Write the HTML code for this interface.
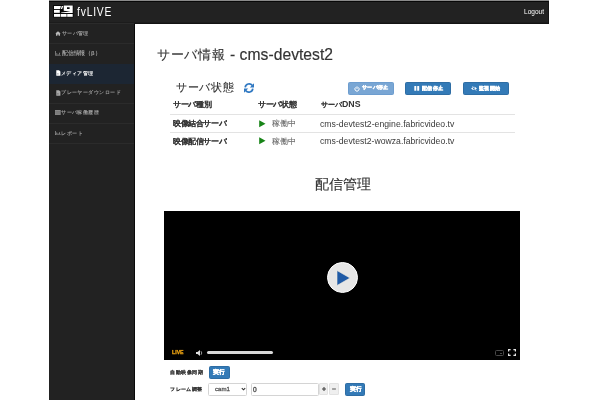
<!DOCTYPE html>
<html><head><meta charset="utf-8">
<style>
*{box-sizing:border-box;margin:0;padding:0}
html,body{width:600px;height:400px;overflow:hidden;background:#fff;font-family:"Liberation Sans",sans-serif;color:#333}
.abs{position:absolute}
.s{position:absolute;white-space:nowrap;line-height:1;transform:scale(0.1);transform-origin:0 0;will-change:transform}
#topline{left:49px;top:0;width:500px;height:1px;background:#8a8a8a}
#nav{left:49px;top:1px;width:500px;height:23px;background:#222;border-top:1px solid #080808;border-bottom:1px solid #141414;border-right:1px solid #151515;box-shadow:inset 0 -1px 0 #1c1c1c}
#side{left:49px;top:24px;width:86px;height:376px;background:#222;border-right:1px solid #080808}
.sep{position:absolute;left:0;width:85px;height:1px;background:#2b2b2b}
.act{position:absolute;left:0;top:39.5px;width:85px;height:20px;background:#1c2633}
.btn{position:absolute;background:#337ab7;border:1px solid #2e6da4;border-radius:1.5px}
.line{position:absolute;height:1px;background:#e3e3e3}
</style></head><body>
<div id="topline" class="abs"></div>
<div id="nav" class="abs">

</div>
<div id="side" class="abs">
  <div class="sep" style="top:-1px"></div>
  <div class="sep" style="top:19px"></div>
  <div class="act"></div>
  <div class="sep" style="top:79px"></div>
  <div class="sep" style="top:99px"></div>
  <div class="sep" style="top:119px"></div>
  <svg class="abs" style="left:6px;top:7px" width="6" height="5" viewBox="0 0 6 5"><path d="M3 0.2 L5.7 2.6 H5 V4.8 H3.6 V3.4 H2.4 V4.8 H1 V2.6 H0.3 Z" fill="#b8b8b8"/></svg>
  <svg class="abs" style="left:6px;top:26.5px" width="6" height="5" viewBox="0 0 6 5"><path d="M0 0 V4.6 H5.8 V4 H0.7 V0 Z M1.4 2.2 H2.2 V3.7 H1.4 Z M2.7 3 H3.5 V3.7 H2.7 Z M4 1.8 H4.8 V3.7 H4 Z" fill="#999"/></svg>
  <svg class="abs" style="left:6.5px;top:46px" width="5" height="6" viewBox="0 0 5 6"><path d="M0.3 0.2 H3 L4.4 1.6 V5.8 H0.3 Z M1.6 3.2 L2.8 3.9 L1.6 4.6 Z" fill="#fff" fill-rule="evenodd"/></svg>
  <svg class="abs" style="left:6.5px;top:66px" width="5" height="6" viewBox="0 0 5 6"><path d="M0.3 0.2 H3 L4.4 1.6 V5.8 H0.3 Z M1.6 3.2 L2.8 3.9 L1.6 4.6 Z" fill="#a8a8a8" fill-rule="evenodd"/></svg>
  <svg class="abs" style="left:6px;top:85.8px" width="6" height="6" viewBox="0 0 6 6"><path d="M0 0 H5.7 V5 H0 Z" fill="#8a8a8a"/><path d="M0.3 1.5 H5.4 M0.3 2.7 H5.4 M0.3 3.9 H5.4" stroke="#5a5a5a" stroke-width="0.35"/></svg>
  <svg class="abs" style="left:6px;top:106.5px" width="6" height="5" viewBox="0 0 6 5"><path d="M0 0 V4 H5.8 V3.4 H0.7 V0 Z M1.4 1.6 H2.2 V3.1 H1.4 Z M2.7 2.4 H3.5 V3.1 H2.7 Z M4 1.2 H4.8 V3.1 H4 Z" fill="#999"/></svg>
</div>

<svg class="abs" style="left:242.5px;top:81.5px" width="12" height="12" viewBox="0 0 12 12"><g fill="none" stroke="#2f78c2" stroke-width="1.7"><path d="M2.2 5.4 A3.9 3.9 0 0 1 9.3 3.6"/><path d="M9.8 6.6 A3.9 3.9 0 0 1 2.7 8.4"/></g><path d="M11 1.2 V5.4 H6.8 Z" fill="#2f78c2"/><path d="M1 10.8 V6.6 H5.2 Z" fill="#2f78c2"/></svg>

<div class="btn" style="left:348px;top:82px;width:46px;height:13px;background:#79a6d4;border-color:#6d9dcf"></div>
<svg class="abs" style="left:353.5px;top:85.5px" width="6" height="6" viewBox="0 0 6 6"><path d="M1.7 1.4 A2.1 2.1 0 1 0 4.3 1.4" stroke="#fff" stroke-width="1" fill="none"/><path d="M3 0.4 V2.9" stroke="#fff" stroke-width="1"/></svg>
<div class="btn" style="left:405px;top:82px;width:46px;height:13px"></div>
<svg class="abs" style="left:413.5px;top:86px" width="6" height="5" viewBox="0 0 6 5"><rect x="0.3" y="0" width="2" height="4.7" rx="0.3" fill="#fff"/><rect x="3.2" y="0" width="2" height="4.7" rx="0.3" fill="#fff"/></svg>
<div class="btn" style="left:463px;top:82px;width:46px;height:13px"></div>
<svg class="abs" style="left:470.5px;top:86px" width="6" height="5" viewBox="0 0 6 5"><path d="M0.1 2.4 Q3 -0.8 5.9 2.4 Q3 5.6 0.1 2.4 Z" fill="#fff"/><circle cx="3" cy="2.4" r="1.1" fill="#337ab7"/><path d="M0.9 0 L5.1 4.8" stroke="#337ab7" stroke-width="0.8"/><path d="M1.3 0.1 L5.5 4.9" stroke="#fff" stroke-width="0.5"/></svg>

<div class="line" style="left:170px;top:114px;width:345px"></div>
<svg class="abs" style="left:259px;top:120px" width="7" height="8" viewBox="0 0 7 8"><path d="M0.2 0.3 L6.5 3.8 L0.2 7.3 Z" fill="#178417"/></svg>
<div class="line" style="left:170px;top:132px;width:345px"></div>
<svg class="abs" style="left:259px;top:137px" width="7" height="8" viewBox="0 0 7 8"><path d="M0.2 0.3 L6.5 3.8 L0.2 7.3 Z" fill="#178417"/></svg>

<!-- video -->
<div class="abs" style="left:164px;top:211px;width:356px;height:149px;background:#000">
  <div class="abs" style="left:163px;top:51px;width:31px;height:31px;border-radius:50%;background:#e6e6e6;border:1px solid #fff"></div>
  <svg class="abs" style="left:172px;top:59px" width="15" height="16" viewBox="0 0 15 16"><path d="M1 0.5 L14 8 L1 15.5 Z" fill="#1f5aa6" stroke="#f5efe0" stroke-width="0.6"/></svg>
  <svg class="abs" style="left:32px;top:138.5px" width="7" height="6" viewBox="0 0 7 6"><path d="M0 2 H1.5 L4 0 V6 L1.5 4 H0 Z" fill="#ddd"/><path d="M5 1.2 Q6.6 3 5 4.8" stroke="#aaa" stroke-width="0.9" fill="none"/></svg>
  <div class="abs" style="left:43px;top:140px;width:66px;height:3px;border-radius:1.5px;background:#d8d8d8"></div>
  <div class="abs" style="left:331px;top:138.5px;width:9px;height:6px;border:1px solid #484848;border-radius:1.5px"><div class="abs" style="left:3.5px;top:2px;width:2.5px;height:1.5px;background:#484848"></div></div>
  <svg class="abs" style="left:344px;top:138px" width="8" height="7" viewBox="0 0 8 7"><path d="M0.6 2.6 V0.6 H2.6 M5.4 0.6 H7.4 V2.6 M7.4 4.4 V6.4 H5.4 M2.6 6.4 H0.6 V4.4" stroke="#e6e6e6" stroke-width="1.2" fill="none"/></svg>
</div>

<!-- controls -->
<div class="btn" style="left:208.5px;top:366px;width:21px;height:13px"></div>
<div class="abs" style="left:208px;top:383px;width:38.5px;height:13px;border:1px solid #d4d4d4;border-radius:1.5px"></div>
<svg class="abs" style="left:240.5px;top:387px" width="5" height="4" viewBox="0 0 5 4"><path d="M0.8 1.1 L2.5 2.8 L4.2 1.1" stroke="#333" stroke-width="1.1" fill="none"/></svg>
<div class="abs" style="left:250.5px;top:383px;width:68.5px;height:13px;border:1px solid #d4d4d4;border-radius:1.5px"></div>
<div class="abs" style="left:319.3px;top:383.2px;width:9px;height:12.3px;border:1px solid #e2e2e2;background:#efefef;border-radius:1px"></div>
<svg class="abs" style="left:321px;top:386px" width="6" height="6" viewBox="0 0 6 6"><path d="M3 1 V5 M1 3 H5" stroke="#444" stroke-width="1.1"/></svg>
<div class="abs" style="left:329.2px;top:383.2px;width:9.5px;height:12.3px;border:1px solid #e2e2e2;background:#efefef;border-radius:1px"></div>
<svg class="abs" style="left:331px;top:386px" width="6" height="6" viewBox="0 0 6 6"><path d="M1.1 3 H4.9" stroke="#555" stroke-width="1"/></svg>
<div class="btn" style="left:345px;top:383px;width:20px;height:13px"></div>

<svg class="abs" style="left:52px;top:4px" width="23" height="15" viewBox="52 4 23 15">
  <rect x="53" y="4.9" width="20.6" height="12.6" rx="0.8" fill="#080808"/>
  <g fill="#fff">
    <path d="M54 6 H60.9 L60.1 9 H54 Z"/>
    <path d="M61.7 6 H63.3 L62.1 9 H60.9 Z"/>
    <path d="M63.75 5.5 H72.7 V13 H61.2 V12.6 L70.5 11.6 L63.75 10.8 Z M67 7.2 H69.6 V8.9 H67 Z" fill-rule="evenodd"/>
    <rect x="54" y="9.9" width="5.8" height="2.9"/>
    <rect x="54" y="14" width="6.2" height="2.8"/>
    <rect x="60.8" y="14" width="5.8" height="2.8"/>
    <rect x="67.2" y="14" width="5.5" height="2.8"/>
  </g>
</svg>
<div class="s" style="left:76.90px;top:4.82px;transform:scale(0.0778,0.1);font-size:132.00px;font-weight:400;color:#fff;letter-spacing:0.08em;-webkit-text-stroke:0.00px #fff">fvLIVE</div>
<div class="s" style="left:523.58px;top:8.59px;transform:scale(0.1037,0.1);font-size:63.00px;font-weight:400;color:#fff;letter-spacing:0em;-webkit-text-stroke:0.00px #fff">Logout</div>
<div class="s" style="left:61.64px;top:31.44px;font-size:52.51px;font-weight:700;color:#a0a0a0;letter-spacing:0em;-webkit-text-stroke:0.00px #a0a0a0">サーバ管理</div>
<div class="s" style="left:61.63px;top:50.34px;font-size:58.15px;font-weight:700;color:#a0a0a0;letter-spacing:0em;-webkit-text-stroke:0.00px #a0a0a0">配信情報（β）</div>
<div class="s" style="left:60.93px;top:70.84px;font-size:53.42px;font-weight:700;color:#fff;letter-spacing:0em;-webkit-text-stroke:0.00px #fff">メディア管理</div>
<div class="s" style="left:60.93px;top:90.35px;font-size:53.56px;font-weight:700;color:#a0a0a0;letter-spacing:0em;-webkit-text-stroke:0.00px #a0a0a0">プレーヤーダウンロード</div>
<div class="s" style="left:61.34px;top:110.00px;font-size:53.57px;font-weight:700;color:#a0a0a0;letter-spacing:0em;-webkit-text-stroke:0.00px #a0a0a0">サーバ稼働履歴</div>
<div class="s" style="left:60.79px;top:129.67px;font-size:54.59px;font-weight:700;color:#a0a0a0;letter-spacing:0em;-webkit-text-stroke:0.00px #a0a0a0">レポート</div>
<div class="s" style="left:156.96px;top:47.90px;font-size:134.75px;font-weight:400;color:#333;letter-spacing:0em;-webkit-text-stroke:1.35px #333">サーバ情報</div>
<div class="s" style="left:230.37px;top:47.11px;font-size:157.19px;font-weight:400;color:#333;letter-spacing:0em;-webkit-text-stroke:1.57px #333">- cms-devtest2</div>
<div class="s" style="left:175.84px;top:80.77px;font-size:114.69px;font-weight:400;color:#333;letter-spacing:0em;-webkit-text-stroke:1.15px #333">サーバ状態</div>
<div class="s" style="left:362.09px;top:84.75px;font-size:53.41px;font-weight:700;color:#fff;letter-spacing:0em;-webkit-text-stroke:4.81px #fff">サーバ停止</div>
<div class="s" style="left:422.04px;top:84.75px;font-size:54.68px;font-weight:700;color:#fff;letter-spacing:0em;-webkit-text-stroke:4.92px #fff">配信停止</div>
<div class="s" style="left:478.74px;top:84.80px;font-size:54.80px;font-weight:700;color:#fff;letter-spacing:0em;-webkit-text-stroke:4.93px #fff">監視開始</div>
<div class="s" style="left:173.27px;top:101.10px;font-size:76.11px;font-weight:700;color:#333;letter-spacing:0em;-webkit-text-stroke:1.52px #333">サーバ種別</div>
<div class="s" style="left:257.77px;top:101.40px;font-size:75.60px;font-weight:700;color:#333;letter-spacing:0em;-webkit-text-stroke:1.51px #333">サーバ状態</div>
<div class="s" style="left:320.59px;top:100.65px;font-size:68.42px;font-weight:700;color:#333;letter-spacing:0em;-webkit-text-stroke:1.37px #333">サーバ</div>
<div class="s" style="left:341.78px;top:100.28px;font-size:88.00px;font-weight:700;color:#333;letter-spacing:0em;-webkit-text-stroke:0.00px #333">DNS</div>
<div class="s" style="left:173.20px;top:120.17px;font-size:75.96px;font-weight:700;color:#333;letter-spacing:0em;-webkit-text-stroke:1.52px #333">映像結合サーバ</div>
<div class="s" style="left:173.20px;top:137.67px;font-size:75.96px;font-weight:700;color:#333;letter-spacing:0em;-webkit-text-stroke:1.52px #333">映像配信サーバ</div>
<div class="s" style="left:271.62px;top:119.09px;font-size:80.42px;font-weight:400;color:#666;letter-spacing:0em;-webkit-text-stroke:0.80px #666">稼働中</div>
<div class="s" style="left:271.62px;top:136.59px;font-size:80.42px;font-weight:400;color:#666;letter-spacing:0em;-webkit-text-stroke:0.80px #666">稼働中</div>
<div class="s" style="left:319.65px;top:120.36px;font-size:86.96px;font-weight:400;color:#3a3a3a;letter-spacing:0em;-webkit-text-stroke:0.00px #3a3a3a">cms-devtest2-engine.fabricvideo.tv</div>
<div class="s" style="left:319.65px;top:136.86px;font-size:86.68px;font-weight:400;color:#3a3a3a;letter-spacing:0em;-webkit-text-stroke:0.00px #3a3a3a">cms-devtest2-wowza.fabricvideo.tv</div>
<div class="s" style="left:314.60px;top:177.30px;font-size:139.13px;font-weight:400;color:#333;letter-spacing:0em;-webkit-text-stroke:1.39px #333">配信管理</div>
<div class="s" style="left:171.64px;top:350.17px;font-size:52.13px;font-weight:700;color:#e8a012;letter-spacing:0em;-webkit-text-stroke:3.13px #e8a012">LIVE</div>
<div class="s" style="left:169.84px;top:368.95px;font-size:54.98px;font-weight:700;color:#333;letter-spacing:0em;-webkit-text-stroke:1.10px #333">自動映像同期</div>
<div class="s" style="left:213.25px;top:368.86px;font-size:55.56px;font-weight:700;color:#fff;letter-spacing:0em;-webkit-text-stroke:5.00px #fff">実行</div>
<div class="s" style="left:170.02px;top:386.05px;font-size:53.78px;font-weight:700;color:#333;letter-spacing:0em;-webkit-text-stroke:1.08px #333">フレーム調整</div>
<div class="s" style="left:214.56px;top:385.52px;font-size:61.02px;font-weight:400;color:#555;letter-spacing:0em;-webkit-text-stroke:3.05px #555">cam1</div>
<div class="s" style="left:252.74px;top:385.51px;font-size:66.00px;font-weight:400;color:#555;letter-spacing:0em;-webkit-text-stroke:3.96px #555">0</div>
<div class="s" style="left:349.50px;top:385.61px;font-size:55.56px;font-weight:700;color:#fff;letter-spacing:0em;-webkit-text-stroke:5.00px #fff">実行</div>
</body></html>
